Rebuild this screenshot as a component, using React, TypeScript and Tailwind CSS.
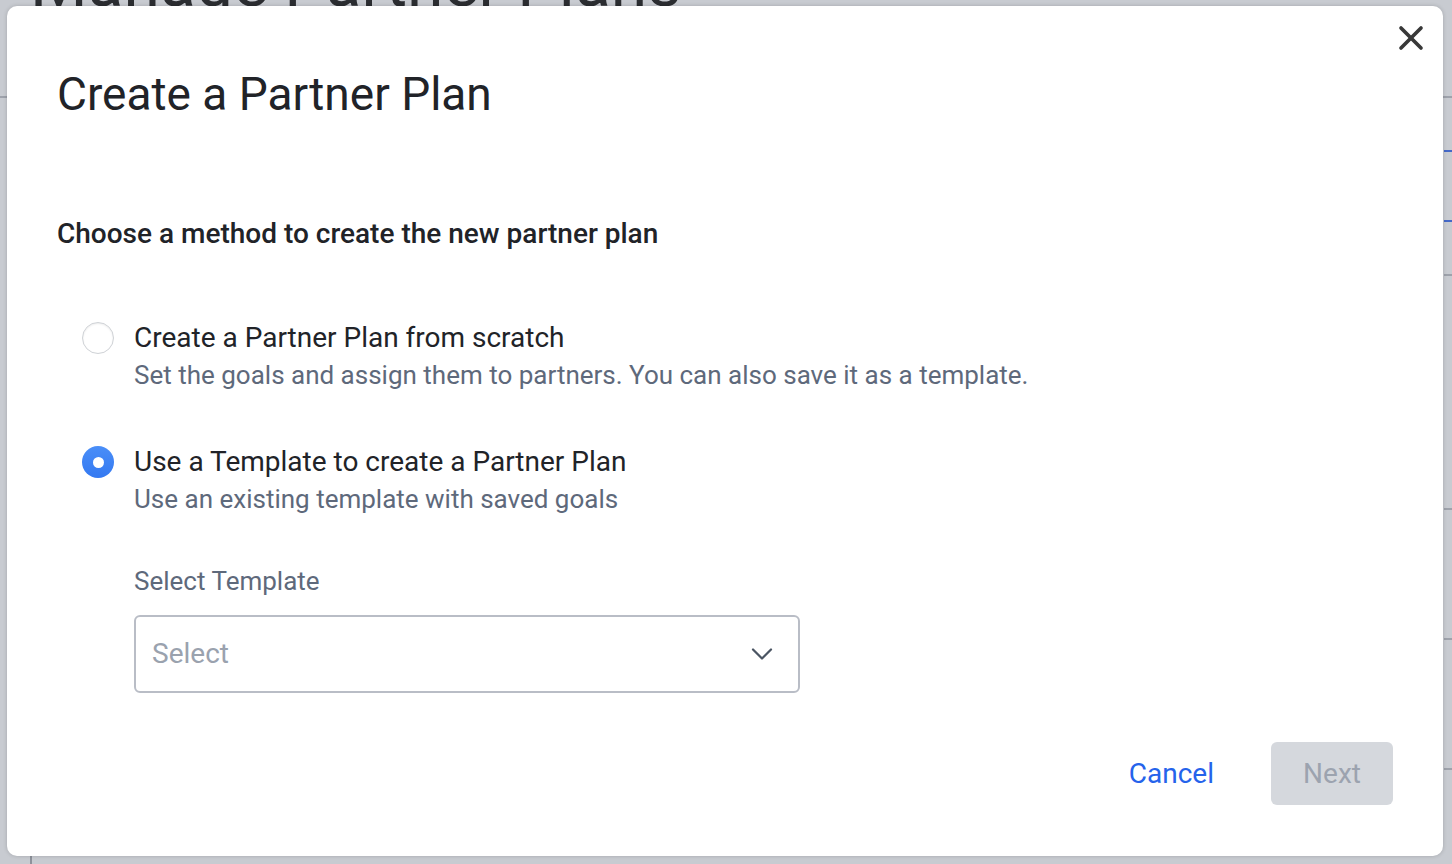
import { ChevronDown, X } from 'lucide-react';

const options = [
  {
    label: 'Create a Partner Plan from scratch',
    hint: 'Set the goals and assign them to partners. You can also save it as a template.',
    checked: false,
  },
  {
    label: 'Use a Template to create a Partner Plan',
    hint: 'Use an existing template with saved goals',
    checked: true,
  },
];

const Radio = ({ checked }: { checked: boolean }) =>
  checked ? (
    <span className="flex h-[32px] w-[32px] shrink-0 items-center justify-center rounded-full bg-gradient-to-b from-[#4a8ef8] to-[#3479f1]">
      <span className="h-[11px] w-[11px] rounded-full bg-white" />
    </span>
  ) : (
    <span className="h-[32px] w-[32px] shrink-0 rounded-full border border-[#cfd2d6] bg-white shadow-[inset_0_1px_2px_rgba(0,0,0,0.08)]" />
  );

export default function App() {
  return (
    <div className="relative h-[864px] w-[1452px] overflow-hidden bg-[#c8cbd1] font-['Roboto',sans-serif]">
      {/* page behind the overlay */}
      <div className="flex flex-col">
        <div className="h-[98px] border-b-2 border-[#9ea2ab]">
          <h1 className="ml-[30px] mt-[-49px] text-[66px] leading-[66px] text-[#2b2d31]">Manage Partner Plans</h1>
        </div>
        <div className="ml-[1444px] h-[54px] border-b-2 border-[#4468c8]" />
        <div className="ml-[1444px] h-[70px] border-b-2 border-[#4468c8]" />
        <div className="ml-[1444px] h-[54px] border-b-2 border-[#9ea2ab]" />
        <div className="ml-[1444px] h-[234px] border-b-2 border-[#9ea2ab]" />
        <div className="ml-[1444px] h-[130px] border-b-2 border-[#9ea2ab]" />
        <div className="ml-[1444px] h-[130px] border-b-2 border-[#9ea2ab]" />
        <div className="ml-[30px] mt-[84px] h-[10px] w-[2px] bg-[#8e929b]" />
      </div>

      {/* modal */}
      <div className="absolute left-[7px] top-[6px] flex h-[850px] w-[1436px] flex-col rounded-[10px] bg-white px-[50px] pt-[60px] shadow-[0_0_4px_rgba(0,0,0,0.18)]">
        <button className="absolute right-[12px] top-[12px] text-[#383838]">
          <X size={40} strokeWidth={2.2} />
        </button>

        <h2 className="text-[46px] leading-[56px] text-[#212328]">Create a Partner Plan</h2>

        <p className="mt-[96px] text-[28px] font-medium leading-[32px] text-[#212328]">
          Choose a method to create the new partner plan
        </p>

        <div className="ml-[25px] mt-[70px] flex flex-col gap-[50px]">
          {options.map((o) => (
            <div key={o.label} className="flex gap-[20px]">
              <div className="flex h-[36px] items-center">
                <Radio checked={o.checked} />
              </div>
              <div className="flex flex-col">
                <span className="text-[28px] leading-[36px] text-[#212328]">{o.label}</span>
                <span className="text-[26px] leading-[38px] text-[#5e697b]">{o.hint}</span>
              </div>
            </div>
          ))}
        </div>

        <div className="ml-[77px] mt-[45px] flex flex-col gap-[16px]">
          <span className="text-[26px] leading-[36px] text-[#5e697b]">Select Template</span>
          <div className="flex h-[78px] w-[666px] items-center justify-between rounded-[6px] border-2 border-[#b9bdc6] pl-[16px] pr-[18px]">
            <span className="text-[28px] text-[#9aa2ae]">Select</span>
            <ChevronDown size={36} strokeWidth={1.5} className="text-[#4b5563]" />
          </div>
        </div>

        <div className="mt-[49px] flex items-center justify-end gap-[57px]">
          <button className="text-[28px] text-[#2563eb]">Cancel</button>
          <button className="h-[63px] w-[122px] rounded-[6px] bg-[#d5d8dd] text-[28px] text-[#9ca3af]">Next</button>
        </div>
      </div>
    </div>
  );
}
